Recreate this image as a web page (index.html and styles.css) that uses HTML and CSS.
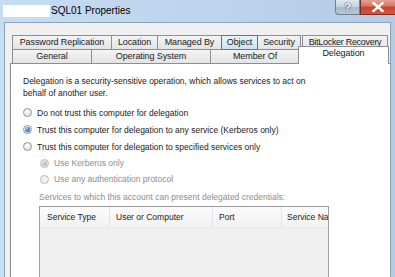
FILE: index.html
```html
<!DOCTYPE html>
<html>
<head>
<meta charset="utf-8">
<link rel="stylesheet" href="styles.css">
</head>
<body>
<div class="window">
  <div class="titlebar">
    <span class="redact"></span>
    <span class="title">SQL01 Properties</span>
    <div class="caption-buttons">
      <span class="btn btn-help">?</span>
      <span class="btn btn-close"><svg width="12" height="10" viewBox="0 0 12 10"><path d="M1.5 1 L10.5 9 M10.5 1 L1.5 9" stroke="#fff" stroke-width="2.4" stroke-linecap="square"/></svg></span>
    </div>
  </div>
  <div class="client">
    <div class="tabs">
      <div class="tabrow">
        <div class="tab w-pr">Password Replication</div>
        <div class="tab w-loc">Location</div>
        <div class="tab w-mb">Managed By</div>
        <div class="tab w-obj hover">Object</div>
        <div class="tab w-sec">Security</div>
        <div class="tab w-bl">BitLocker Recovery</div>
      </div>
      <div class="tabrow">
        <div class="tab w-gen">General</div>
        <div class="tab w-os">Operating System</div>
        <div class="tab w-mo">Member Of</div>
        <div class="tab w-del selected">Delegation</div>
      </div>
    </div>
    <div class="panel">
      <p class="intro">Delegation is a security-sensitive operation, which allows services to act on<br>behalf of another user.</p>
      <div class="radio"><span class="dot"></span>Do not trust this computer for delegation</div>
      <div class="radio"><span class="dot checked"></span>Trust this computer for delegation to any service (Kerberos only)</div>
      <div class="radio"><span class="dot"></span>Trust this computer for delegation to specified services only</div>
      <div class="radio sub disabled"><span class="dot checked"></span>Use Kerberos only</div>
      <div class="radio sub disabled last"><span class="dot"></span>Use any authentication protocol</div>
      <div class="services-label">Services to which this account can present delegated credentials:</div>
      <div class="listbox">
        <div class="list-header">
          <div class="col c1">Service Type</div>
          <div class="col c2">User or Computer</div>
          <div class="col c3">Port</div>
          <div class="col c4">Service Na</div>
        </div>
      </div>
    </div>
  </div>
</div>
</body>
</html>
```

FILE: styles.css
```css
html, body {
  margin: 0;
  padding: 0;
}
body {
  width: 395px;
  height: 277px;
  overflow: hidden;
  font-family: "Liberation Sans", Arial, sans-serif;
  background: #bcd4ee;
}
.window {
  width: 395px;
  height: 277px;
  display: flex;
  flex-direction: column;
  background: linear-gradient(90deg, #c6dcf2 0%, #bcd3ec 60%, #b2cbe6 100%);
}
.titlebar {
  height: 22px;
  display: flex;
  align-items: flex-start;
  flex: none;
}
.redact {
  width: 47px;
  height: 12px;
  margin: 5px 1px 0 3px;
  background: #fff;
}
.title {
  font-size: 10px;
  line-height: 12px;
  margin-top: 5px;
  color: #000;
}
.caption-buttons {
  margin-left: auto;
  display: flex;
}
.btn {
  height: 15px;
  display: flex;
  align-items: center;
  justify-content: center;
  box-sizing: border-box;
  border: 1px solid #6d7f93;
  border-top: none;
}
.btn-help {
  width: 25px;
  background: linear-gradient(#dfe7f0 0%, #c5d2e0 50%, #aab9ca 51%, #b9c8d8 100%);
  border-radius: 0 0 0 4px;
  color: #fff;
  font-size: 11px;
  font-weight: bold;
  text-shadow: 0 0 2px #3d4c5e, 0 0 1px #3d4c5e;
}
.btn-close {
  width: 35px;
  border-color: #7a2a22;
  border-right: none;
  background: linear-gradient(#e6a196 0%, #d9735f 45%, #c6432d 50%, #d15a3f 100%);
}
.client {
  flex: 1;
  margin: 0 4px 0 4px;
  border-left: 1px solid #8ea2b9;
  border-right: 1px solid #8ea2b9;
  border-top: 1px solid #8ea2b9;
  background: #f0f0f0;
  padding: 12px 0 0 5px;
  display: flex;
  flex-direction: column;
  overflow: hidden;
}
.tabs {
  display: flex;
  flex-direction: column;
  font-size: 9px;
}
.tabrow {
  display: flex;
  margin-left: 2px;
  height: 14px;
}
.tab {
  box-sizing: border-box;
  height: 15px;
  border: 1px solid #8c8e94;
  margin-right: -1px;
  background: linear-gradient(#f4f4f4, #e4e4e4);
  text-align: center;
  line-height: 13px;
  color: #1a1a1a;
  white-space: nowrap;
  overflow: hidden;
  letter-spacing: -0.1px;
}
.tab.hover {
  background: linear-gradient(#e8f3fc, #c9e2f6);
  border-color: #3c7fb1;
  position: relative;
  z-index: 1;
}
.w-pr { width: 100px; }
.w-loc { width: 47px; }
.w-mb { width: 65px; }
.w-obj { width: 37px; }
.w-sec { width: 44px; margin-right: 1px; }
.w-bl { width: 86px; letter-spacing: -0.3px; }
.w-gen { width: 80px; }
.w-os { width: 120px; }
.w-mo { width: 90px; }
.w-del { width: 91px; }
.tab.selected {
  background: #fff;
  border-color: #8c8e94;
  border-bottom: none;
  height: 18px;
  margin-top: -3px;
  line-height: 13px;
  margin-left: -1px;
  position: relative;
  z-index: 2;
}
.panel {
  flex: 1;
  margin-top: 0;
  width: 381px;
  box-sizing: border-box;
  background: #fff;
  border: 1px solid #8c8e94;
  padding: 11px 12px 0 12px;
  font-size: 8.5px;
  color: #1a1a1a;
}
.intro {
  margin: 0;
  line-height: 12px;
}
.radio {
  height: 17px;
  display: flex;
  align-items: center;
  white-space: nowrap;
}
.intro + .radio {
  margin-top: 5px;
}
.dot {
  width: 9px;
  height: 9px;
  box-sizing: border-box;
  border-radius: 50%;
  border: 1px solid #8f9297;
  background: radial-gradient(circle at 40% 35%, #ffffff 0%, #eaeaea 55%, #d5d5d5 100%);
  margin-right: 5px;
  display: flex;
  align-items: center;
  justify-content: center;
  flex: none;
}
.dot.checked::after {
  content: "";
  width: 5px;
  height: 5px;
  border-radius: 50%;
  background: radial-gradient(circle at 35% 35%, #8fd0f8 0%, #2a77c6 60%, #18407a 100%);
}
.radio.sub {
  height: 16px;
  padding-left: 17px;
}
.radio.disabled {
  color: #8d8d8d;
}
.radio.disabled .dot {
  border-color: #b8b8b8;
  background: #f2f2f2;
}
.radio.disabled .dot.checked::after {
  background: radial-gradient(circle at 35% 35%, #d8d8d8 0%, #a6a6a6 100%);
}
.services-label {
  margin-top: 4px;
  padding-left: 16px;
  line-height: 12px;
  color: #8d8d8d;
  white-space: nowrap;
}
.listbox {
  margin: 3px 0 0 16px;
  width: 290px;
  height: 80px;
  box-sizing: border-box;
  border: 1px solid #9a9ca1;
  background: #f0f0f0;
}
.list-header {
  display: flex;
  height: 20px;
  background: linear-gradient(#fbfbfb, #f3f3f3);
  border-bottom: 1px solid #e8e8e8;
}
.col {
  box-sizing: border-box;
  padding-left: 6px;
  line-height: 20px;
  border-right: 1px solid #e2e3e5;
  white-space: nowrap;
  overflow: hidden;
  color: #1a1a1a;
}
.c1 { width: 70px; padding-left: 7px; }
.c2 { width: 103px; }
.c3 { width: 69px; }
.c4 { flex: 1; border-right: none; padding-left: 5px; }
```
